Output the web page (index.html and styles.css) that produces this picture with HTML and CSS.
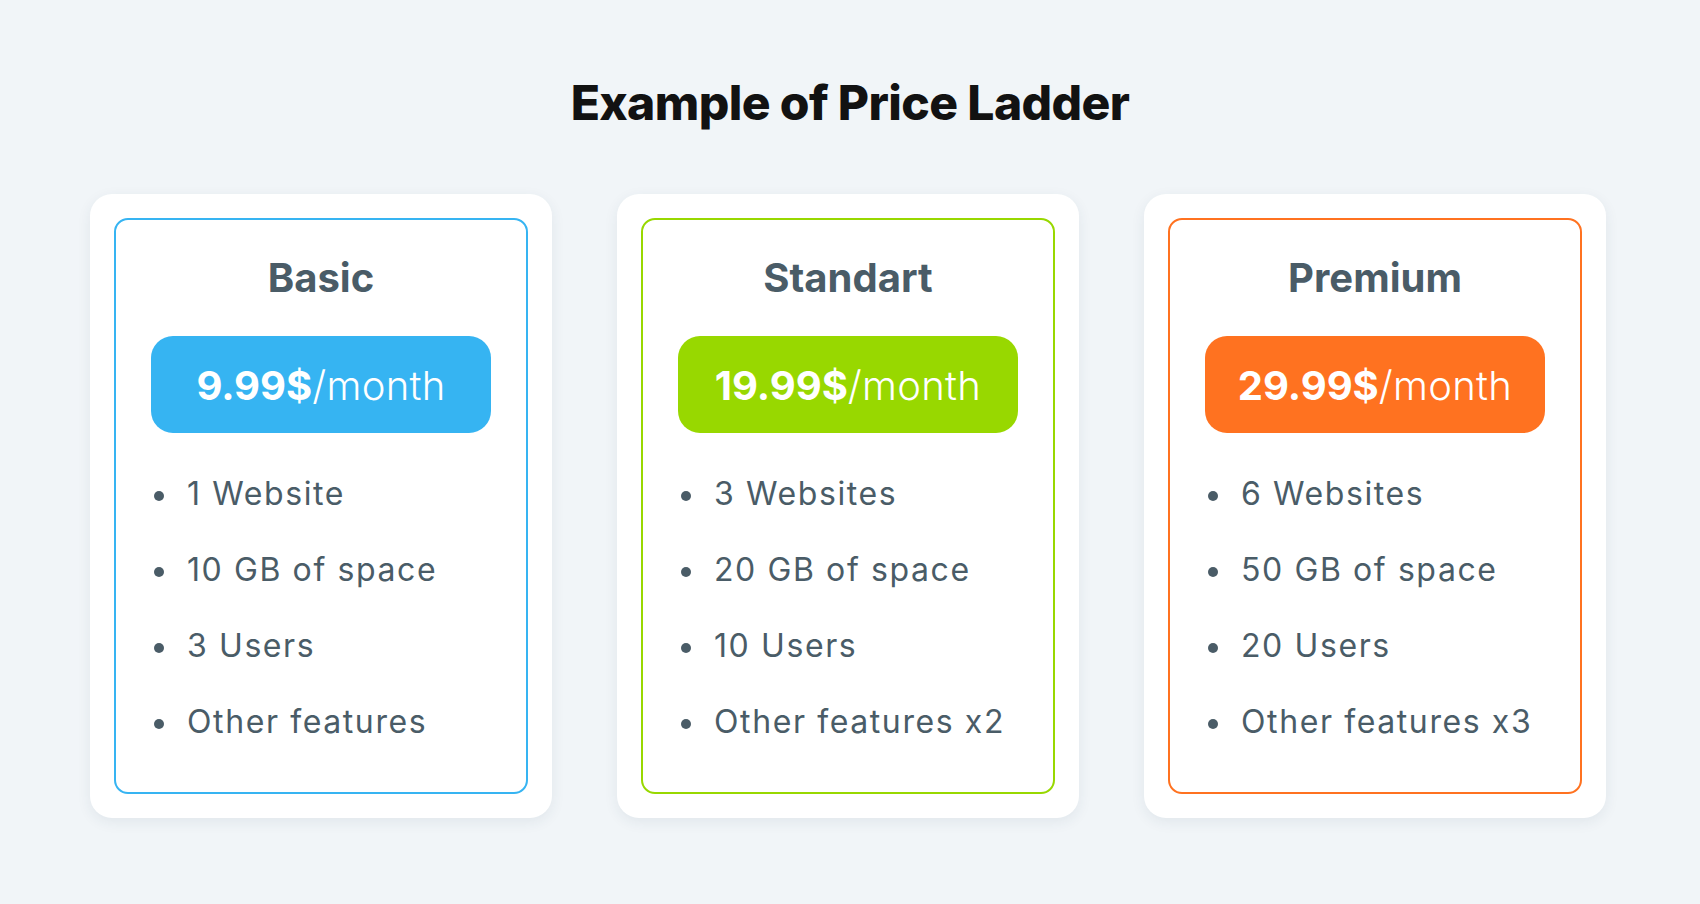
FILE: index.html
```html
<!DOCTYPE html>
<html lang="en">
<head>
<meta charset="utf-8">
<title>Example of Price Ladder</title>
<link rel="stylesheet" href="styles.css">
</head>
<body>
<main class="page">
  <h1 class="title">Example of Price Ladder</h1>
  <div class="plans">
    <section class="card">
      <div class="card-inner basic">
        <h2 class="plan-name">Basic</h2>
        <div class="price"><b>9.99$</b>/month</div>
        <ul class="features">
          <li>1 Website</li>
          <li>10 GB of space</li>
          <li>3 Users</li>
          <li>Other features</li>
        </ul>
      </div>
    </section>
    <section class="card">
      <div class="card-inner standart">
        <h2 class="plan-name">Standart</h2>
        <div class="price"><b>19.99$</b>/month</div>
        <ul class="features">
          <li>3 Websites</li>
          <li>20 GB of space</li>
          <li>10 Users</li>
          <li>Other features x2</li>
        </ul>
      </div>
    </section>
    <section class="card">
      <div class="card-inner premium">
        <h2 class="plan-name">Premium</h2>
        <div class="price"><b>29.99$</b>/month</div>
        <ul class="features">
          <li>6 Websites</li>
          <li>50 GB of space</li>
          <li>20 Users</li>
          <li>Other features x3</li>
        </ul>
      </div>
    </section>
  </div>
</main>
</body>
</html>
```

FILE: styles.css
```css
* { box-sizing: border-box; }

html, body {
  margin: 0;
  padding: 0;
}

body {
  background: #f1f5f8;
  font-family: Inter, "Noto Sans", "Liberation Sans", sans-serif;
  width: 1700px;
  height: 904px;
  overflow: hidden;
}

.page {
  padding-top: 74px;
}

.title {
  margin: 0;
  text-align: center;
  font-size: 48px;
  line-height: 58px;
  font-weight: 800;
  color: #121212;
  letter-spacing: -0.6px;
}

.plans {
  margin-top: 62px;
  padding-left: 90px;
  display: grid;
  grid-template-columns: repeat(3, 462px);
  column-gap: 65px;
}

.card {
  background: #ffffff;
  border-radius: 22px;
  padding: 24px;
  box-shadow: 0 4px 14px rgba(40, 60, 90, 0.08);
}

.card-inner {
  border: 2px solid;
  border-radius: 14px;
  padding: 34px 0 32px;
  display: flex;
  flex-direction: column;
  align-items: center;
}

.card-inner.basic { border-color: #36b4f2; }
.card-inner.standart { border-color: #98d800; }
.card-inner.premium { border-color: #ff7220; }

.plan-name {
  margin: 0;
  font-size: 40px;
  line-height: 48px;
  font-weight: 700;
  color: #4a5c67;
}

.price {
  margin-top: 34px;
  width: 340px;
  height: 97px;
  border-radius: 22px;
  text-align: center;
  font-size: 40px;
  line-height: 99px;
  font-weight: 300;
  color: #ffffff;
  letter-spacing: 0.3px;
}

.price b { font-weight: 700; letter-spacing: 0; }

.basic .price { background: #36b4f2; }
.standart .price { background: #98d800; }
.premium .price { background: #ff7220; }

.features {
  align-self: stretch;
  list-style: none;
  margin: 23px 0 0;
  padding: 0 0 0 36px;
}

.features li {
  display: flex;
  align-items: center;
  font-size: 32px;
  line-height: 76px;
  color: #4a5c67;
  letter-spacing: 1.6px;
}

.features li::before {
  content: "";
  width: 10px;
  height: 10px;
  border-radius: 50%;
  background: #4a5c67;
  margin: 4px 23px 0 2px;
  flex: none;
}
```
